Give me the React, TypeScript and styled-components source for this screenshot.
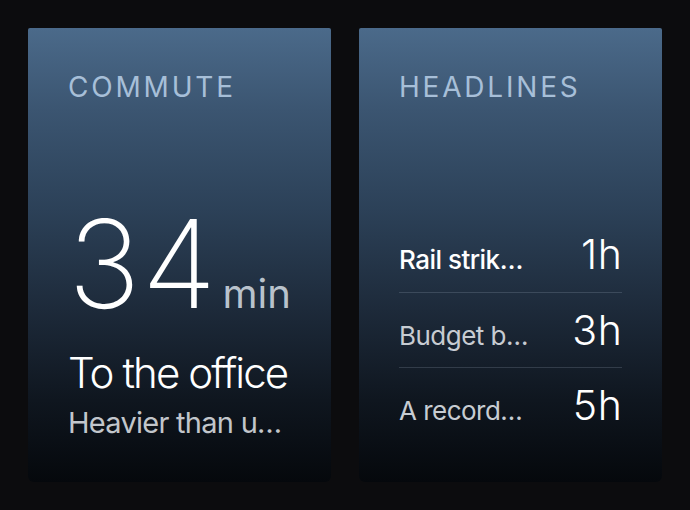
import React from "react";
import styled, { createGlobalStyle } from "styled-components";

interface Headline {
  title: string;
  age: string;
  fresh?: boolean;
}

// titles are already clipped to fit the narrow watch-style tile
const headlines: Headline[] = [
  { title: "Rail strik…", age: "1h", fresh: true },
  { title: "Budget b…", age: "3h" },
  { title: "A record…", age: "5h" },
];

export default function App() {
  return (
    <>
      <GlobalStyle />
      <Board>
        <Card>
          <Label>Commute</Label>
          <CommuteBody>
            <Duration>
              <Minutes>34</Minutes>
              <Unit>min</Unit>
            </Duration>
            <Destination>To the office</Destination>
            <Note>Heavier than u…</Note>
          </CommuteBody>
        </Card>
        <Card>
          <Label>Headlines</Label>
          <List>
            {headlines.map((h) => (
              <Row key={h.age}>
                <Title $fresh={h.fresh}>{h.title}</Title>
                <Age>{h.age}</Age>
              </Row>
            ))}
          </List>
        </Card>
      </Board>
    </>
  );
}

// style
const GlobalStyle = createGlobalStyle`
  html, body {
    margin: 0;
    background: #0c0c0e;
  }
  body {
    font-family: Inter, "Noto Sans", sans-serif;
    -webkit-font-smoothing: antialiased;
  }
`;

const Board = styled.main`
  display: grid;
  grid-template-columns: 303px 303px;
  gap: 28px;
  padding: 28px;
  height: 510px;
  box-sizing: border-box;
`;

const Card = styled.section`
  display: flex;
  flex-direction: column;
  height: 454px;
  box-sizing: border-box;
  padding: 40px;
  border-radius: 2px 2px 6px 6px;
  background: linear-gradient(
    180deg,
    #4b6a8a 0%,
    #3b5571 18%,
    #2c4158 40%,
    #1d2a3a 62%,
    #0f161f 82%,
    #05080c 100%
  );
  overflow: hidden;
`;

const Label = styled.h2`
  margin: 0;
  font-size: 28px;
  line-height: 38px;
  font-weight: 400;
  letter-spacing: 0.1em;
  text-transform: uppercase;
  color: #a7bfd8;
`;

const CommuteBody = styled.div`
  margin-top: auto;
  display: flex;
  flex-direction: column;
`;

const Duration = styled.div`
  display: flex;
  align-items: baseline;
  gap: 5px;
`;

const Minutes = styled.span`
  font-size: 122px;
  line-height: 110px;
  font-weight: 200;
  color: #ffffff;
  letter-spacing: 0.01em;
`;

const Unit = styled.span`
  font-size: 40px;
  font-weight: 400;
  color: #b9c2cc;
`;

const Destination = styled.div`
  margin-top: 29px;
  margin-bottom: 6px;
  font-size: 42px;
  line-height: 50px;
  font-weight: 300;
  letter-spacing: -0.045em;
  color: #ffffff;
  white-space: nowrap;
`;

const Note = styled.div`
  font-size: 29px;
  line-height: 38px;
  font-weight: 400;
  letter-spacing: -0.025em;
  color: #c2c6cb;
  white-space: nowrap;
`;

const List = styled.ul`
  list-style: none;
  margin: auto 0 0;
  padding: 0;
`;

const Row = styled.li`
  display: flex;
  align-items: baseline;
  justify-content: space-between;
  box-sizing: border-box;
  height: 75px;
  padding-top: 13px;
  & + & {
    border-top: 1px solid rgba(190, 205, 220, 0.18);
  }
`;

const Title = styled.span<{ $fresh?: boolean }>`
  font-size: 26px;
  font-weight: ${(p) => (p.$fresh ? 500 : 400)};
  letter-spacing: -0.02em;
  color: ${(p) => (p.$fresh ? "#ffffff" : "#c7ccd2")};
  white-space: nowrap;
`;

const Age = styled.span`
  font-size: 41px;
  line-height: 48px;
  font-weight: 300;
  letter-spacing: 0.02em;
  margin-right: -0.02em;
  color: #ffffff;
`;
